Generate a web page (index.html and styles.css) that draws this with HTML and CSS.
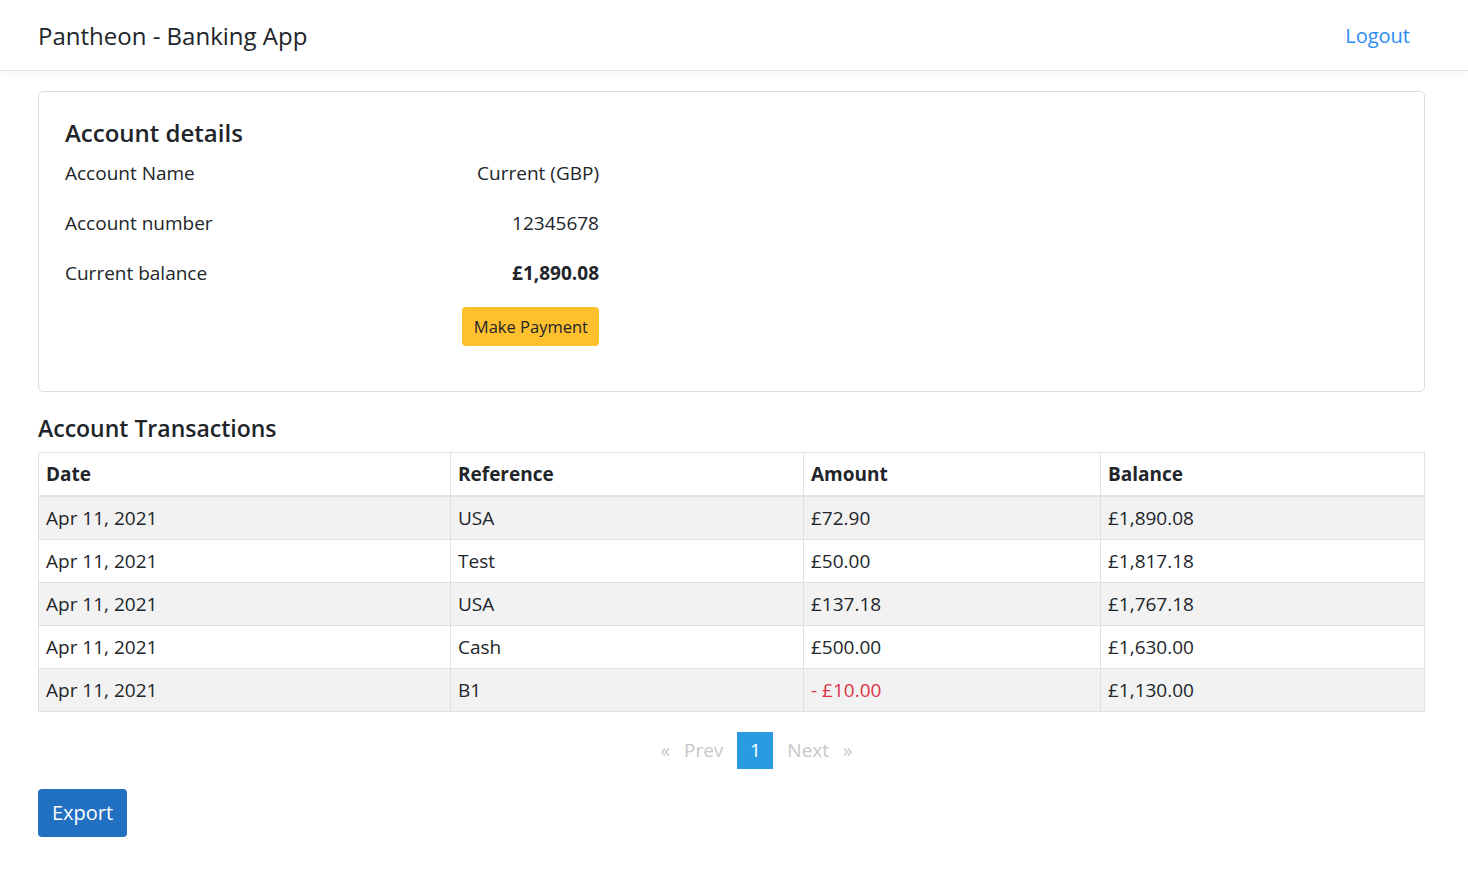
FILE: index.html
```html
<!DOCTYPE html>
<html lang="en">
<head>
<meta charset="utf-8">
<title>Pantheon - Banking App</title>
<link rel="stylesheet" href="styles.css">
</head>
<body>
<header class="navbar">
  <span class="brand">Pantheon - Banking App</span>
  <a class="logout" href="#">Logout</a>
</header>
<main class="container">
  <section class="card">
    <h3 class="card-title">Account details</h3>
    <div class="details">
      <div class="row"><span class="label">Account Name</span><span class="value">Current (GBP)</span></div>
      <div class="row"><span class="label">Account number</span><span class="value">12345678</span></div>
      <div class="row"><span class="label">Current balance</span><span class="value strong">£1,890.08</span></div>
      <div class="row actions"><button class="btn btn-warning">Make Payment</button></div>
    </div>
  </section>

  <h4 class="section-title">Account Transactions</h4>
  <table class="table">
    <colgroup>
      <col style="width:412px">
      <col style="width:353px">
      <col style="width:297px">
      <col>
    </colgroup>
    <thead>
      <tr><th>Date</th><th>Reference</th><th>Amount</th><th>Balance</th></tr>
    </thead>
    <tbody>
      <tr><td>Apr 11, 2021</td><td>USA</td><td>£72.90</td><td>£1,890.08</td></tr>
      <tr><td>Apr 11, 2021</td><td>Test</td><td>£50.00</td><td>£1,817.18</td></tr>
      <tr><td>Apr 11, 2021</td><td>USA</td><td>£137.18</td><td>£1,767.18</td></tr>
      <tr><td>Apr 11, 2021</td><td>Cash</td><td>£500.00</td><td>£1,630.00</td></tr>
      <tr><td>Apr 11, 2021</td><td>B1</td><td class="negative">- £10.00</td><td>£1,130.00</td></tr>
    </tbody>
  </table>

  <nav class="pagination">
    <span class="page-link">«</span>
    <span class="page-link">Prev</span>
    <span class="page-link active">1</span>
    <span class="page-link">Next</span>
    <span class="page-link">»</span>
  </nav>

  <button class="btn btn-primary">Export</button>
</main>
</body>
</html>
```

FILE: styles.css
```css
* { box-sizing: border-box; }

body {
  margin: 0;
  font-family: "Open Sans", "Noto Sans", "Liberation Sans", sans-serif;
  font-size: 19px;
  line-height: 1.5;
  color: #212529;
  background: #fff;
}

.navbar {
  height: 71px;
  display: flex;
  align-items: center;
  justify-content: space-between;
  padding: 2px 58px 0 38px;
  border-bottom: 1px solid #dfe1e6;
  box-shadow: 0 3px 10px rgba(0, 0, 0, 0.04);
}

.brand {
  font-size: 24px;
  color: #212529;
}

.logout {
  font-size: 20px;
  color: #2a8cf0;
  text-decoration: none;
}

.container {
  padding: 20px 43px 40px 38px;
}

.card {
  border: 1px solid #dcdcdc;
  border-radius: 5px;
  padding: 23px 26px 45px;
}

.card-title {
  margin: 0 0 8px;
  font-size: 24px;
  font-weight: 600;
  line-height: 1.5;
}

.details {
  width: 534px;
}

.row {
  display: flex;
  justify-content: space-between;
  height: 50px;
  align-items: flex-start;
}

.value.strong { font-weight: 700; }

.row.actions {
  justify-content: flex-end;
  height: auto;
  margin-top: -2px;
}

.btn {
  font-family: inherit;
  border: none;
  border-radius: 4px;
  cursor: pointer;
}

.btn-warning {
  background: #ffc02e;
  color: #212529;
  font-size: 16.5px;
  height: 39px;
  padding: 0 11px 0 12px;
}

.btn-primary {
  background: #2270c1;
  color: #fff;
  font-size: 20px;
  height: 48px;
  padding: 0 14px;
}

.section-title {
  margin: 19px 0 6px;
  font-size: 23px;
  font-weight: 600;
  line-height: 1.5;
}

.table {
  width: 100%;
  border-collapse: collapse;
  border: 1px solid #dee2e6;
  table-layout: fixed;
}

.table th,
.table td {
  border: 1px solid #dee2e6;
  padding: 1px 7px 0;
  height: 43px;
  text-align: left;
  vertical-align: middle;
}

.table th {
  font-weight: 700;
  border-bottom: 2px solid #dee2e6;
  height: 44px;
}

.table tbody tr:nth-child(odd) { background: #f2f2f2; }

.negative { color: #dc3545; }

.pagination {
  display: flex;
  justify-content: center;
  align-items: center;
  margin: 20px 0 20px 50px;
  color: #c8c8c8;
}

.page-link {
  padding: 0 7px;
  line-height: 37px;
  height: 37px;
}

.page-link.active {
  background: #2a9ae3;
  color: #fff;
  width: 36px;
  text-align: center;
  margin: 0 7px;
}
```
